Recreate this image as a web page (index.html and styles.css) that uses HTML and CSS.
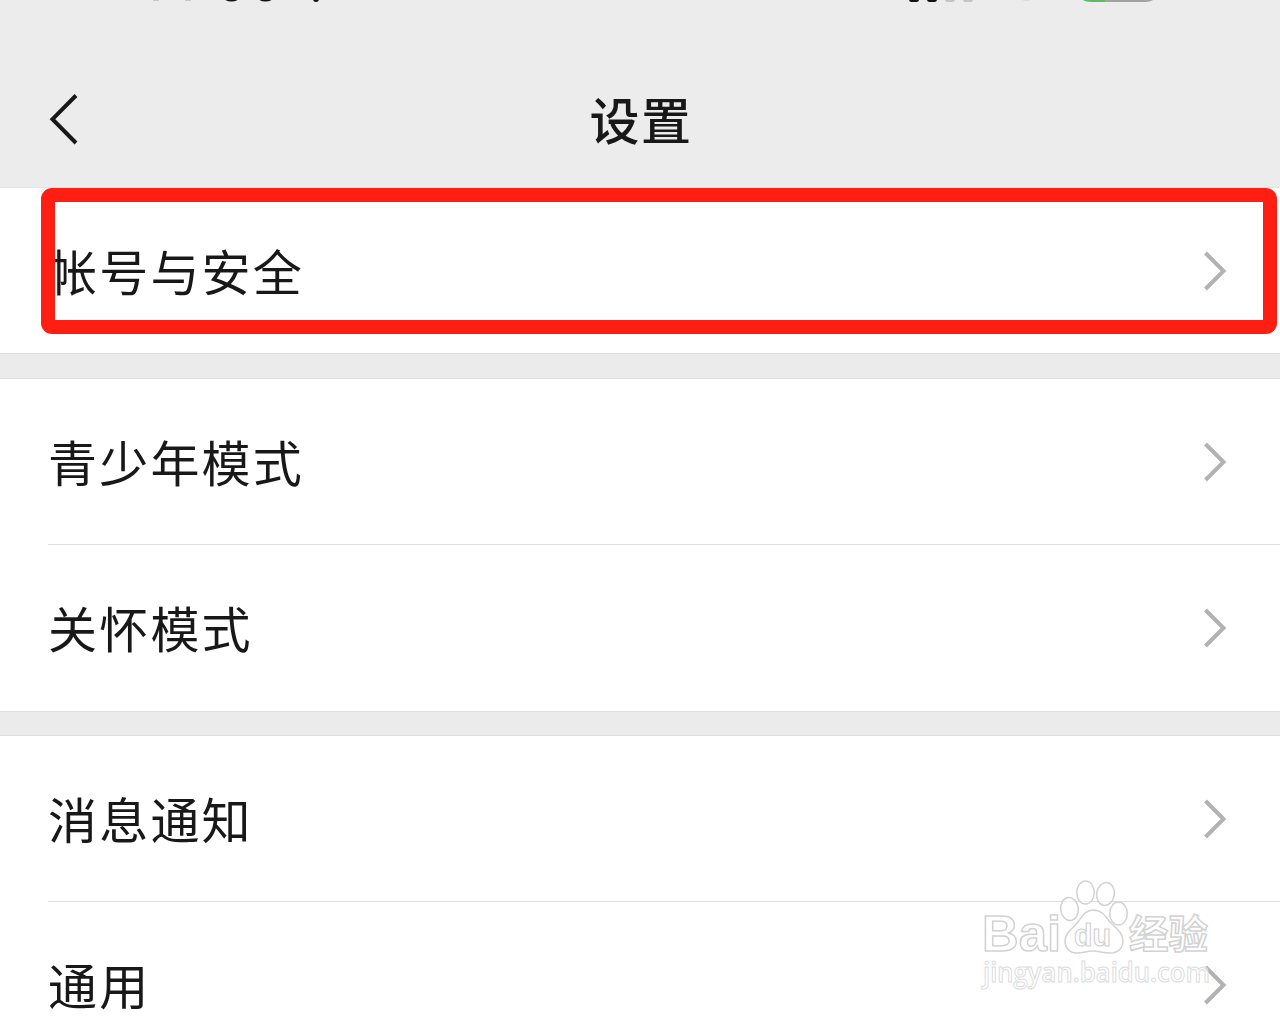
FILE: index.html
```
<!DOCTYPE html>
<html lang="zh-CN">
<head>
	<meta charset="UTF-8">
	<meta name="viewport" content="width=device-width">
	<title>设置</title>
	<link rel="stylesheet" href="styles.css">
</head>
<body>
	<div class="wrap">
		<div class="header">
			<svg class="status" width="1280" height="6" viewBox="0 0 1280 6">
				<g fill="#c8c8c8">
					<rect x="153" y="0" width="6" height="1"/>
					<rect x="185" y="0" width="6" height="1"/>
				</g>
				<g fill="#111">
					<ellipse cx="231.500" cy="-3" rx="8" ry="4.500"/>
					<ellipse cx="265.500" cy="-3" rx="8" ry="4.500"/>
					<circle cx="316" cy="-1" r="3"/>
					<rect x="909" y="-6" width="10" height="8" rx="2.500"/>
					<rect x="927" y="-6" width="10" height="8" rx="2.500"/>
				</g>
				<g fill="#c4c4c4">
					<rect x="945" y="-6" width="10" height="8" rx="2.500"/>
					<rect x="963" y="-6" width="10" height="8" rx="2.500"/>
					<rect x="1023" y="-1" width="7" height="2" rx="1" fill="#dcdcdc"/>
				</g>
				<path d="M1078-6h27v8h-14q-10 0-13-8z" fill="#63b767"/>
				<path d="M1105-6h53q-3 8-13 8h-40z" fill="#a2a2a2"/>
			</svg>
			<svg class="back" width="30" height="52" viewBox="0 0 30 52">
				<path d="M28 2.500 4.500 26.200 28 50" fill="none" stroke="#181818" stroke-width="4"/>
			</svg>
			<div class="title">设置</div>
		</div>
		<div class="group">
			<div class="item">
				<span>帐号与安全</span>
				<svg class="arrow" viewBox="0 0 24 40"><path d="M2.500 2 20.500 20 2.500 38"/></svg>
				<div class="mark"></div>
			</div>
		</div>
		<div class="group mode">
			<div class="item">
				<span>青少年模式</span>
				<svg class="arrow" viewBox="0 0 24 40"><path d="M2.500 2 20.500 20 2.500 38"/></svg>
			</div>
			<div class="item">
				<span>关怀模式</span>
				<svg class="arrow" viewBox="0 0 24 40"><path d="M2.500 2 20.500 20 2.500 38"/></svg>
			</div>
		</div>
		<div class="group">
			<div class="item">
				<span>消息通知</span>
				<svg class="arrow" viewBox="0 0 24 40"><path d="M2.500 2 20.500 20 2.500 38"/></svg>
			</div>
			<div class="item">
				<span>通用</span>
				<svg class="arrow" viewBox="0 0 24 40"><path d="M2.500 2 20.500 20 2.500 38"/></svg>
			</div>
		</div>
		<svg class="watermark" width="250" height="120" viewBox="0 0 250 120">
			<text class="latin" x="12" y="80.500" font-size="50" textLength="79" lengthAdjust="spacingAndGlyphs">Bai</text>
			<g class="paw">
				<ellipse cx="99.500" cy="39" rx="8.800" ry="11.500" transform="rotate(-8 99.500 39)"/>
				<ellipse cx="115.500" cy="22.500" rx="8.800" ry="11.500"/>
				<ellipse cx="135.500" cy="24" rx="8.800" ry="11.500" transform="rotate(10 135.500 24)"/>
				<ellipse cx="148.500" cy="43.500" rx="8.800" ry="11.500"/>
				<path d="M123 40c9 0 13 7 17 12 6 6 13 11 13 19 0 8-6 12-13 12-7 0-11-2-17-2s-10 2-16 2c-8 0-12-6-12-12 0-8 8-13 13-19 4-5 7-12 15-12z"/>
			</g>
			<text class="du" x="104" y="76" font-size="32" textLength="37" lengthAdjust="spacingAndGlyphs">du</text>
			<text class="cjk" x="159" y="78" font-size="39" textLength="79" lengthAdjust="spacingAndGlyphs">经验</text>
			<text class="url" x="13" y="112" font-size="27" textLength="227" lengthAdjust="spacingAndGlyphs">jingyan.baidu.com</text>
		</svg>
	</div>
</body>
</html>
```
FILE: styles.css
```
body {
	margin: 0;
	padding: 0;
	background-color: #fff;
	font-family: "Liberation Sans", "Noto Sans CJK SC", sans-serif;
	color: #181818;
}
.wrap {
	position: relative;
	width: 1280px;
	height: 1018px;
	overflow: hidden;
	background: #ebebeb;
}
.header {
	position: relative;
	display: flex;
	align-items: center;
	box-sizing: border-box;
	height: 188px;
	padding: 50px 48px 0;
	background: #ececec;
	border-bottom: 1px solid #e2e2e2;
}
.status {
	position: absolute;
	top: 0;
	left: 0;
}
.back {
	width: 30px;
	height: 52px;
}
.title {
	flex: 1;
	padding-top: 8px;
	padding-right: 28px;
	font-size: 50px;
	font-weight: 500;
	line-height: 74px;
	letter-spacing: 1.5px;
	text-align: center;
}
.group {
	margin-bottom: 24px;
	background: #fff;
	border-bottom: 1px solid #dedede;
}
.group + .group {
	border-top: 1px solid #dedede;
}
.item {
	position: relative;
	display: flex;
	align-items: center;
	justify-content: space-between;
	height: 165px;
	margin-left: 48px;
	padding-right: 53px;
	font-size: 49px;
	letter-spacing: 2.2px;
}
.item span {
	padding-bottom: 3px;
}
.item + .item {
	height: 166px;
	border-top: 1px solid #dedede;
}
.mode {
	margin-bottom: 23px;
}
.arrow {
	width: 24px;
	height: 40px;
	fill: none;
	stroke: #b2b2b2;
	stroke-width: 4;
}
.mark {
	position: absolute;
	top: 0;
	left: -7px;
	box-sizing: border-box;
	width: 1236px;
	height: 146px;
	border: 14px solid #ff1e12;
	border-radius: 11px;
}
.watermark {
	position: absolute;
	left: 970px;
	top: 870px;
	fill: rgba(255, 255, 255, 0.6);
	stroke: #d2d2d2;
	stroke-width: 1.5px;
}
.latin {
	font-family: "Liberation Sans", sans-serif;
	font-weight: bold;
}
.du {
	font-family: "Liberation Sans", sans-serif;
	font-weight: bold;
	stroke-width: 1.2px;
}
.cjk {
	font-family: "Noto Sans CJK SC", sans-serif;
	font-weight: bold;
}
.url {
	font-family: "Open Sans", sans-serif;
	font-weight: 600;
	stroke: #dcdcdc;
	stroke-width: 1px;
}
```
